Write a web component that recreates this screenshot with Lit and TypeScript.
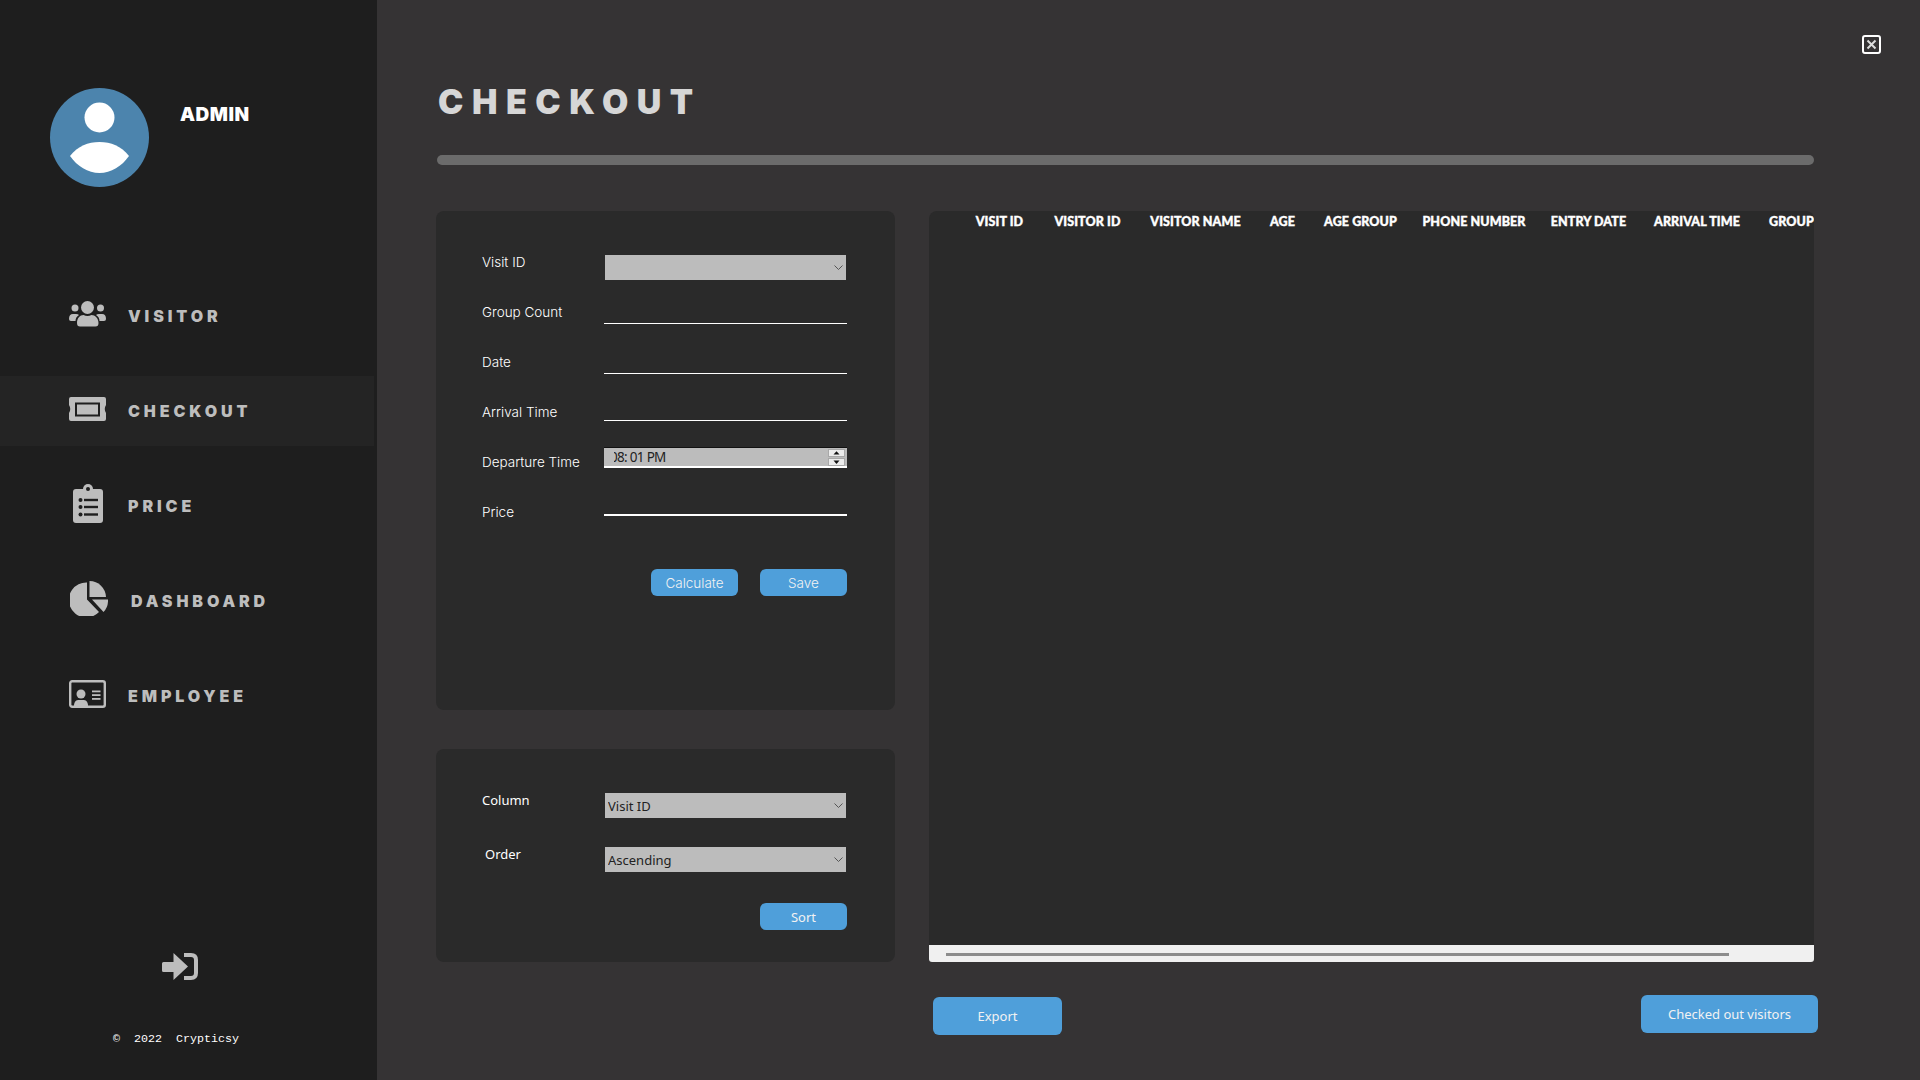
import { LitElement, css, html, svg } from 'lit';
import { customElement } from 'lit/decorators.js';

const icons = {
    visitor: svg`<svg class="icon" width="37" height="26" viewBox="0 0 37 26">
        <circle cx="18.5" cy="6.5" r="6.5"/><circle cx="6" cy="7" r="3.5"/><circle cx="31.5" cy="7" r="3.5"/>
        <path d="M8 22C8 17 11 14 14.5 14Q18.5 16 22.5 14C26 14 29.500 17 29.500 22Q29.500 25.500 26.500 25.500H11Q8 25.500 8 22Z"/>
        <path d="M0 18Q0 13 4 13H7Q9 13 10 14Q6.500 16 6.500 20H2Q0 20 0 18Z"/>
        <path d="M37 18Q37 13 33 13H30Q28 13 27 14Q30.500 16 30.500 20H35Q37 20 37 18Z"/>
    </svg>`,
    checkout: svg`<svg class="icon" width="37" height="24" viewBox="0 0 37 24">
        <path d="M2 0H35Q37 0 37 2V8Q34.500 12 37 16V22Q37 24 35 24H2Q0 24 0 22V16Q2.500 12 0 8V2Q0 0 2 0Z"/>
        <rect x="7" y="6.500" width="23" height="12" fill="none" stroke="#1e1e1e" stroke-width="2"/>
    </svg>`,
    price: svg`<svg class="icon" width="30" height="39" viewBox="0 0 30 39">
        <rect y="5" width="30" height="34" rx="3"/><circle cx="15" cy="5" r="5"/><circle cx="15" cy="5" r="2" fill="#1e1e1e"/>
        <g fill="#1e1e1e"><circle cx="7.500" cy="16" r="2"/><circle cx="7.500" cy="23" r="2"/><circle cx="7.500" cy="30.500" r="2"/>
        <rect x="11" y="14.800" width="14" height="2.400"/><rect x="11" y="21.800" width="14" height="2.400"/><rect x="11" y="29.300" width="14" height="2.400"/></g>
    </svg>`,
    dashboard: svg`<svg class="icon" width="38" height="35" viewBox="0 0 38 35">
        <path d="M17 1.500V18.500L29 31A17.500 17.500 0 1 1 17 1.500Z"/>
        <path d="M19.500 0A16.500 16.500 0 0 1 36 16H19.500Z"/>
        <path d="M22 18.500H38A17 17 0 0 1 33.500 31Z"/>
    </svg>`,
    employee: svg`<svg class="icon" width="37" height="28" viewBox="0 0 37 28">
        <rect x="1.200" y="1.200" width="34.600" height="25.600" rx="2" fill="none" stroke="#bdbdbd" stroke-width="2.400"/>
        <circle cx="12" cy="14" r="4.500"/><path d="M5 26.500Q5 20 9 20H15Q19 20 19 26.500Z"/>
        <rect x="23" y="10.500" width="8.500" height="1.800"/><rect x="23" y="14.200" width="8.500" height="1.800"/><rect x="23" y="18" width="8.500" height="1.800"/>
    </svg>`,
};

const menu = [
    { name: 'VISITOR', icon: icons.visitor },
    { name: 'CHECKOUT', icon: icons.checkout, active: true },
    { name: 'PRICE', icon: icons.price, narrow: true },
    { name: 'DASHBOARD', icon: icons.dashboard, wide: true },
    { name: 'EMPLOYEE', icon: icons.employee },
];

const columns = ['VISIT ID', 'VISITOR ID', 'VISITOR NAME', 'AGE', 'AGE GROUP', 'PHONE NUMBER', 'ENTRY DATE', 'ARRIVAL TIME', 'GROUP COUNT'];

const chevron = svg`<svg class="chevron" width="9" height="5" viewBox="0 0 9 5"><path d="M.5 .5L4.500 4.500L8.500 .5" fill="none" stroke="#555" stroke-width="1"/></svg>`;

@customElement('app-root')
export class AppRoot extends LitElement {

    static styles = css`
        :host {
            display: flex;
            width: 1920px;
            height: 1080px;
            overflow: hidden;
            background: #353334;
            font-family: Inter, sans-serif;
            color: #fff;
        }

        .sidebar {
            flex: 0 0 377px;
            display: flex;
            flex-direction: column;
            background: #1e1e1e;
        }
        .profile {
            display: flex;
            padding: 88px 0 0 50px;
        }
        .avatar {
            display: block;
        }
        .admin {
            margin: 17px 0 0 31px;
            font-size: 19px;
            line-height: 20px;
            font-weight: 900;
            letter-spacing: 0.5px;
        }
        nav {
            display: flex;
            flex-direction: column;
            gap: 25px;
            margin-top: 94px;
        }
        .item {
            display: flex;
            align-items: center;
            height: 70px;
            margin-right: 3px;
            padding-left: 69px;
            color: #bdbdbd;
        }
        .item.active {
            background: #242424;
        }
        .icon {
            flex: none;
            fill: #bdbdbd;
            margin-bottom: 5px;
        }
        .item span {
            margin-left: 22px;
            margin-bottom: 1px;
            font-size: 16px;
            font-weight: 900;
            letter-spacing: 3.900px;
        }
        .item.narrow .icon {
            margin-left: 4px;
            margin-right: 3px;
        }
        .item.wide .icon {
            margin-left: 1px;
        }
        .item.wide span {
            margin-left: 23px;
        }
        .logout {
            display: block;
            margin: auto 0 0 162px;
        }
        .copy {
            margin: 52px 0 34px 113px;
            font-family: "Liberation Mono", monospace;
            font-size: 11.670px;
            line-height: 14px;
            white-space: pre;
        }

        main {
            flex: 1;
            display: flex;
            padding-left: 59px;
            min-width: 0;
        }
        .content {
            flex: 0 0 1378px;
            min-width: 0;
        }
        h1 {
            margin: 81px 0 0 2px;
            font-size: 34px;
            line-height: 42px;
            font-weight: 900;
            letter-spacing: 8.500px;
            color: #d6d6d6;
        }
        .bar {
            height: 10px;
            margin: 32px 0 46px 1px;
            border-radius: 5px;
            background: #6b6b6b;
        }
        .columns {
            display: flex;
            gap: 34px;
        }
        .left {
            flex: 0 0 459px;
            display: flex;
            flex-direction: column;
            gap: 39px;
        }
        .card {
            box-sizing: border-box;
            background: #2a2a2a;
            border-radius: 8px;
        }
        .checkout-form {
            height: 499px;
            padding: 26px 48px 0 46px;
        }
        .sort-form {
            height: 213px;
            padding: 40px 48px 0 46px;
        }
        .row {
            display: grid;
            grid-template-columns: 122px 243px;
            height: 50px;
            align-items: center;
        }
        .row label {
            font-size: 13.500px;
            line-height: 18px;
            font-weight: 300;
            white-space: nowrap;
        }
        .row input {
            align-self: start;
            box-sizing: border-box;
            width: 243px;
            margin: 0;
            padding: 0;
            background: transparent;
            border: none;
            border-bottom: 1px solid #fff;
            outline: none;
        }
        .line-37 { height: 37px; }
        .line-34 { height: 34px; }
        .row input.line-29 {
            height: 29px;
            border-bottom-width: 2px;
        }
        .select {
            display: grid;
            align-items: center;
            align-self: start;
            width: 241px;
            height: 25px;
            margin: 18px 0 0 1px;
        }
        .select select {
            grid-area: 1 / 1;
            appearance: none;
            height: 25px;
            margin: 0;
            padding: 0 0 0 3px;
            border: none;
            border-radius: 0;
            background: #bcbcbc;
            color: #222;
            font-family: "Noto Sans", sans-serif;
            font-size: 13px;
        }
        .chevron {
            grid-area: 1 / 1;
            justify-self: end;
            margin-right: 3px;
            pointer-events: none;
        }
        .time {
            align-self: start;
            box-sizing: border-box;
            display: flex;
            align-items: flex-start;
            height: 21px;
            margin-top: 10px;
            background: #bcbcbc;
            border-top: 1px solid #111;
            border-bottom: 2px solid #fff;
            color: #222;
            font-family: "Noto Sans", sans-serif;
            font-size: 13.500px;
            line-height: 19px;
        }
        .time-clip {
            flex: 1;
            margin-left: 10px;
            overflow: hidden;
            white-space: nowrap;
        }
        .time-clip span {
            margin-left: -4px;
            display: inline-block;
            letter-spacing: -0.7px;
        }
        .spin {
            display: flex;
            flex-direction: column;
            gap: 1px;
            width: 17px;
            margin: 1px 2px 0 0;
        }
        .spin svg {
            display: block;
            box-sizing: border-box;
            width: 17px;
            height: 8px;
            background: #ececec;
            border: 1px solid #a8a8a8;
        }
        .actions {
            display: flex;
            justify-content: flex-end;
            gap: 22px;
            margin-top: 32px;
        }
        button {
            width: 87px;
            height: 27px;
            padding: 0;
            border: none;
            border-radius: 6px;
            background: #4f9fda;
            color: #f2f2f2;
            font-family: Inter, sans-serif;
            font-size: 13.500px;
            font-weight: 300;
        }
        .sort-row {
            display: grid;
            grid-template-columns: 122px 243px;
            height: 54px;
            align-items: start;
        }
        .sort-row label {
            margin-top: 2px;
            font-family: "Noto Sans", sans-serif;
            font-size: 13px;
            line-height: 18px;
        }
        .sort-row .select {
            margin-top: 4px;
        }
        .order {
            padding-left: 3px;
        }
        .sort-actions {
            display: flex;
            justify-content: flex-end;
            margin-top: 6px;
        }
        .sort-actions button {
            font-family: "Noto Sans", sans-serif;
            font-size: 13px;
            font-weight: 400;
        }

        .right {
            flex: 1;
            min-width: 0;
        }
        .table {
            display: flex;
            flex-direction: column;
            height: 751px;
            overflow: hidden;
            border-radius: 8px 8px 3px 3px;
        }
        .thead {
            flex: 1;
            display: grid;
            grid-template-columns: 49px 67px 89px 25px 71px 96px 73px 84px 90px;
            column-gap: 30px;
            align-content: start;
            padding: 4px 0 0 46px;
            font-family: Lato, sans-serif;
            font-size: 12.500px;
            line-height: 14px;
            font-weight: 900;
            letter-spacing: 0.1px;
            -webkit-text-stroke: 0.4px #fff;
            white-space: nowrap;
        }
        .thead div {
            display: flex;
            justify-content: center;
        }
        .thead div:last-child {
            justify-content: flex-start;
        }
        .scroll {
            flex: 0 0 17px;
            box-sizing: border-box;
            padding: 8px 85px 0 17px;
            background: #f0f0f0;
        }
        .thumb {
            height: 2.500px;
            background: #8c8c8c;
        }
        .foot {
            display: flex;
            justify-content: space-between;
            align-items: flex-start;
            margin: 33px -4px 0 4px;
        }
        .foot button {
            height: 38px;
            font-family: "Noto Sans", sans-serif;
            font-size: 13px;
            font-weight: 400;
        }
        .foot .export {
            width: 129px;
            margin-top: 2px;
        }
        .foot .visitors {
            width: 177px;
        }
        .close {
            display: block;
            flex: none;
            margin: 35px 0 0 48px;
        }
    `;

    render() {
        return html`
            <aside class="sidebar">
                <div class="profile">
                    <svg class="avatar" width="99" height="99" viewBox="0 0 99 99">
                        <circle cx="49.5" cy="49.5" r="49.5" fill="#4c84ad"/>
                        <circle cx="49.5" cy="29.5" r="15" fill="#fff"/>
                        <path d="M20 68C28 58 38 54 49.500 54C61 54 71 58 79 68C72 78 61 85 49.500 85C38 85 27 78 20 68Z" fill="#fff"/>
                    </svg>
                    <div class="admin">ADMIN</div>
                </div>
                <nav>
                    ${menu.map(m => html`
                        <div class="item ${m.active ? 'active' : ''} ${m.narrow ? 'narrow' : ''} ${m.wide ? 'wide' : ''}">
                            ${m.icon}<span>${m.name}</span>
                        </div>
                    `)}
                </nav>
                <svg class="logout" width="36" height="27" viewBox="0 0 36 27">
                    <path d="M11.500 0L26 13.500L11.500 27V19H1.500Q0 19 0 17.500V10.500Q0 9 1.500 9H11.500Z" fill="#bdbdbd"/>
                    <path d="M22 2H29Q34 2 34 7V20Q34 25 29 25H22" fill="none" stroke="#bdbdbd" stroke-width="4"/>
                </svg>
                <div class="copy">©  2022  Crypticsy</div>
            </aside>
            <main>
                <div class="content">
                    <h1>CHECKOUT</h1>
                    <div class="bar"></div>
                    <div class="columns">
                        <div class="left">
                            <div class="card checkout-form">
                                <div class="row">
                                    <label>Visit ID</label>
                                    <div class="select"><select></select>${chevron}</div>
                                </div>
                                <div class="row"><label>Group Count</label><input class="line-37"></div>
                                <div class="row"><label>Date</label><input class="line-37"></div>
                                <div class="row"><label>Arrival Time</label><input class="line-34"></div>
                                <div class="row">
                                    <label>Departure Time</label>
                                    <div class="time">
                                        <div class="time-clip"><span>08: 01 PM</span></div>
                                        <div class="spin">
                                            <svg viewBox="0 0 17 8"><path d="M4.500 6H12.500L8.500 1.500Z" fill="#111"/></svg>
                                            <svg viewBox="0 0 17 8"><path d="M4.500 2H12.500L8.500 6.500Z" fill="#111"/></svg>
                                        </div>
                                    </div>
                                </div>
                                <div class="row"><label>Price</label><input class="line-29"></div>
                                <div class="actions">
                                    <button>Calculate</button>
                                    <button>Save</button>
                                </div>
                            </div>
                            <div class="card sort-form">
                                <div class="sort-row">
                                    <label>Column</label>
                                    <div class="select"><select><option>Visit ID</option></select>${chevron}</div>
                                </div>
                                <div class="sort-row">
                                    <label class="order">Order</label>
                                    <div class="select"><select><option>Ascending</option></select>${chevron}</div>
                                </div>
                                <div class="sort-actions"><button>Sort</button></div>
                            </div>
                        </div>
                        <div class="right">
                            <div class="card table">
                                <div class="thead">
                                    ${columns.map(c => html`<div>${c}</div>`)}
                                </div>
                                <div class="scroll"><div class="thumb"></div></div>
                            </div>
                            <div class="foot">
                                <button class="export">Export</button>
                                <button class="visitors">Checked out visitors</button>
                            </div>
                        </div>
                    </div>
                </div>
                <svg class="close" width="19" height="19" viewBox="0 0 19 19">
                    <rect x="1" y="1" width="17" height="17" rx="2" fill="none" stroke="#fff" stroke-width="2"/>
                    <path d="M5.500 5.500L13.500 13.500M13.500 5.500L5.500 13.500" stroke="#ddd" stroke-width="2"/>
                </svg>
            </main>
        `;
    }
}
